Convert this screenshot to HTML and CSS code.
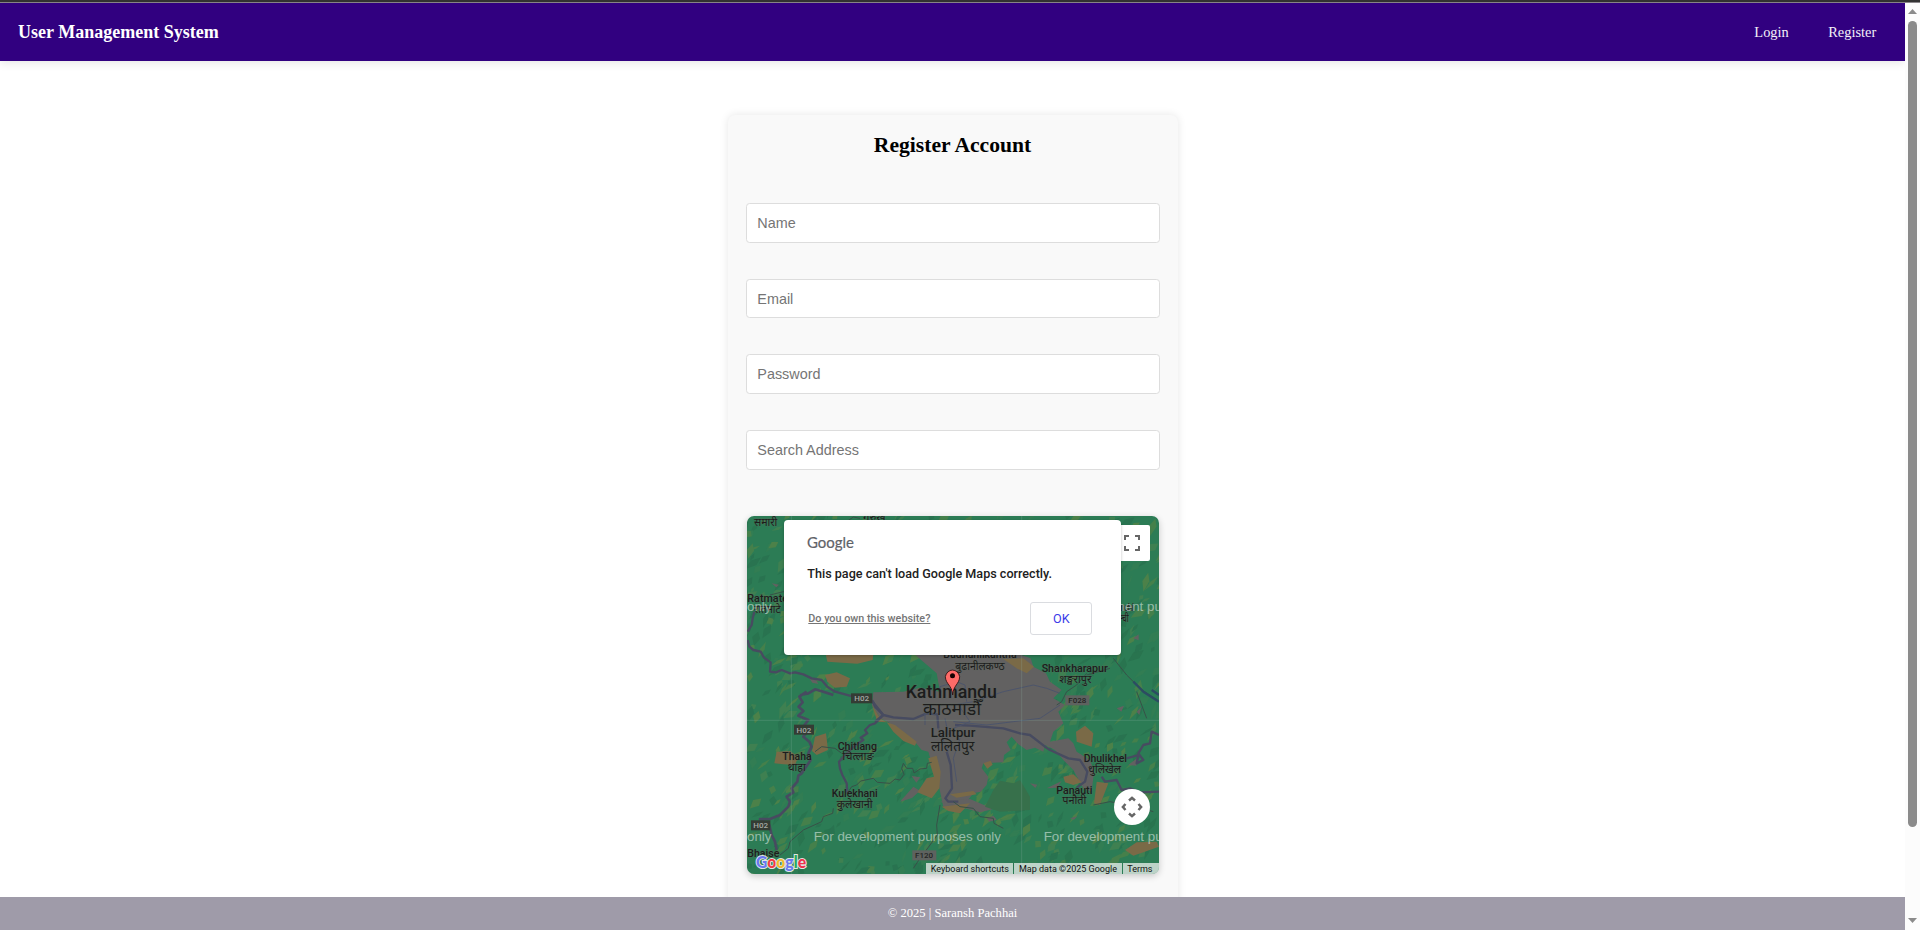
FILE: index.html
```html
<!DOCTYPE html>
<html lang="en">
<head>
<meta charset="utf-8">
<title>User Management System</title>
<link rel="stylesheet" href="styles.css">
</head>
<body>
<div class="window-edge"></div>
<div class="viewport">
  <div class="page">
    <header class="navbar">
      <div class="brand">User Management System</div>
      <nav class="nav-links"><a>Login</a><a>Register</a></nav>
    </header>
    <main class="content">
      <form class="card">
        <h2 class="card-title">Register Account</h2>
        <input class="field" placeholder="Name">
        <input class="field" placeholder="Email">
        <input class="field" placeholder="Password">
        <input class="field" placeholder="Search Address">
        <div class="map">
          <svg class="map-canvas" viewBox="21 33 1236 1074" preserveAspectRatio="none">
            <rect x="21" y="33" width="1236" height="1074" fill="#2c7c55"/>
            <g id="terrain"></g>
            <g fill="#626161">
              <path d="M520 445L590 505 600 560 540 548 490 560 400 562 396 600 420 640 446 652 480 686 520 705 545 735 565 740 572 765 592 800 598 850 610 905 625 915 680 890 700 865 722 860 740 840 745 815 725 790 730 775 790 772 792 750 812 735 800 712 815 695 835 718 860 735 885 728 910 740 915 720 945 735 970 765 1000 795 1030 850 1055 860 1062 800 1050 765 1010 740 1000 715 985 700 930 710 940 680 970 655 955 620 975 600 940 580 965 555 930 530 918 505 880 485 872 460 830 445Z"/>
              <path d="M205 515l22 8 8 14-18-4zM95 235l22 4-8 8zM480 890l40-45 20 12-24 22zM515 813l26 4-12 16zM920 850l45-22-14 20zM1005 90l18-4-6 12zM1130 610l22-8-8 18zM1190 620l14-14-6 24zM1165 780l28-22-4 24zM990 940l22-6-10 10zM870 835l22 4-6 10zM740 940l20-8 10 12-22 6zM600 890l90-8 70 30-40 10zM1180 400l16-12 0 18z"/>
            </g>
            <g fill="#7a6a47">
              <path d="M257 447L400 448 398 465 352 476 262 470z"/>
              <path d="M255 510L290 502 330 520 320 545 285 548 262 530z"/>
              <path d="M225 695L258 685 264 735 230 750 216 738z"/>
              <path d="M110 740L150 738 175 755 165 780 130 778 103 775z"/>
              <path d="M396 600L412 650 440 652 420 640zM440 652L465 660 530 710 525 722 490 708 460 680z"/>
              <path d="M565 760L590 752 602 800 598 850 575 880 532 862 560 820 582 815z"/>
              <path d="M790 462L850 460 882 485 860 505 830 490z"/>
              <path d="M1008 680L1035 662 1060 685 1055 725 1010 710z"/>
              <path d="M970 815L1000 808 1025 832 1000 840 975 832zM1070 830L1105 835 1080 900 1062 895z"/>
              <path d="M1155 1035L1190 1012 1250 1010 1257 1025 1180 1052zM605 905L690 895 660 925 625 918z"/>
              <path d="M730 775l22-8 6 12-16 12zM630 868l70-10 10 10-60 10z"/>
            </g>
            <path d="M760 855l20-28 40 8 20-10 30 50 0 40-90 5-45-15z" fill="#37704b"/>
            <g fill="none" stroke="#474b60" stroke-linejoin="round">
              <path stroke-width="7" d="M43 320L38 340 35 360 23 380M23 405L28 425 40 435 62 440 72 458 92 472 90 500 108 502 125 495 150 505 165 502 190 508 215 520 245 525 262 545 285 560 340 575 375 578 398 588 405 605 430 630 405 655 390 660 375 675 382 685 362 698 370 705 355 715 335 730 320 745 297 770 300 790 307 810 320 835 322 865"/>
              <path stroke-width="8" d="M180 570L205 565 225 553 250 560 280 570M200 560L178 575 188 592 176 605 190 618 175 632 205 645 190 665 202 680 190 695 208 710 215 725 205 745 212 765 185 805 175 812 172 830 155 850 160 862 140 875 150 890 145 905 120 930 90 942 60 942 88 960 95 990 105 1010 110 1035"/>
              <path stroke-width="7" d="M398 590L430 630 460 637 520 642 560 625 592 628 595 670M430 630L405 650M620 740L632 780 636 850 616 880 625 890 655 890"/>
              <path stroke-width="7" d="M645 660L690 662 790 670 840 685 870 690 915 725 930 735 985 760 1020 765 1042 800 1035 830 1010 848M1085 815L1095 830 1130 825 1145 855 1170 850 1200 862 1257 860M1160 760L1195 750 1190 775 1210 765 1195 745 1210 720 1230 715 1235 680 1257 690"/>
              <path stroke-width="3" stroke="#4d556b" d="M600 565L600 545 650 530 675 540 680 590M640 600L700 590 790 560 880 540 920 550 960 565M640 650L740 660 900 640 960 600M655 600L690 650 640 670M595 670L625 740M615 640L625 690M555 600v60M660 700l-20 60 10 70"/>
              <path stroke-width="3" stroke="#385148" d="M322 865L335 845 350 840 362 828 400 820 412 832 450 835 465 822 480 825 492 808 485 790 490 775 500 790 518 790 522 804 540 792 560 790 562 775 575 772M280 910L278 925 250 935 245 950 190 975 150 1010 145 1030 120 1050M600 900L590 960 592 990 570 1020 540 1060 520 1090M640 890L660 905 700 910 720 935 760 940 762 955 790 970M1040 505L1010 540 980 560 965 590 950 600M1120 460L1160 510 1200 550 1257 590M1040 510L1110 490M1220 640L1205 600 1190 560M1060 900L1110 890 1190 905 1240 920M90 270L130 260 155 275M225 740l20-15 40 5 20 15M320 50l20-14 20 4"/>
              <path stroke-width="7" stroke="#2c4c62" d="M1180 530L1210 560 1257 590M1235 555L1257 570"/>
            </g>
            <path d="M154 33V1107M845 33V1107M21 646H1257" stroke="#90b5a4" stroke-opacity=".38" stroke-width="2"/>
            <g class="shield">
              <rect x="333" y="565" width="64" height="30"/><text x="365" y="588">H02</text>
              <rect x="162" y="659" width="60" height="30"/><text x="192" y="683">H02</text>
              <rect x="33" y="946" width="58" height="30"/><text x="62" y="970">H02</text>
              <rect class="light" x="517" y="1036" width="72" height="30"/><text class="dark" x="552" y="1059">F120</text>
              <rect class="light" x="976" y="571" width="72" height="30"/><text class="dark" x="1012" y="594">F028</text>
            </g>
            <g class="place">
              <text class="local" x="77" y="62" textLength="70">समारी</text>
              <text class="local" x="403" y="48">गुरुख</text>
              <text x="22" y="291" text-anchor="start" textLength="122">Ratmate</text>
              <text class="local" x="82" y="324" textLength="80">रातमाटे</text>
              <text x="720" y="460" textLength="220">Budhanilkantha</text>
              <text class="local" x="720" y="494" textLength="148">बुढानीलकण्ठ</text>
              <text x="1004" y="501" textLength="198">Shankharapur</text>
              <text class="local" x="1006" y="535" textLength="96">शङ्खरापुर</text>
              <text x="1160" y="318" textLength="92" dx="-25">Melamchi</text>
              <text class="local" x="1146" y="350" textLength="56" dx="-8">मेलम्ची</text>
              <text class="city" x="634" y="578" textLength="274">Kathmandu</text>
              <text class="city-local" x="636" y="630" textLength="174">काठमाडौँ</text>
              <text class="town" x="639" y="696" textLength="134">Lalitpur</text>
              <text class="town-local" x="638" y="737" textLength="130">ललितपुर</text>
              <text x="352" y="734" textLength="118">Chitlang</text>
              <text class="local" x="354" y="766" textLength="94">चित्लाङ</text>
              <text x="171" y="766" textLength="88">Thaha</text>
              <text class="local" x="170" y="798" textLength="54">थाहा</text>
              <text x="344" y="877" textLength="138">Kulekhani</text>
              <text class="local" x="344" y="910" textLength="108">कुलेखानी</text>
              <text x="1096" y="771" textLength="130">Dhulikhel</text>
              <text class="local" x="1094" y="803" textLength="98">धुलिखेल</text>
              <text x="1003" y="866" textLength="108">Panauti</text>
              <text class="local" x="1003" y="897" textLength="72">पनौती</text>
              <text x="22" y="1057" text-anchor="start" textLength="96">Bhaise</text>
            </g>
            <g class="dev-note">
              <text x="21" y="319" textLength="73">only</text>
              <text x="1132" y="319">nent purposes</text>
              <text x="21" y="1008" textLength="73">only</text>
              <text x="221" y="1008" textLength="562">For development purposes only</text>
              <text x="911" y="1008" textLength="562">For development purposes only</text>
            </g>
            <path d="M638 570C636 540 617 538 616 515a22 25 0 0 1 43 0C658 538 640 540 638 570Z" fill="#ff6b68" stroke="#2a1010" stroke-width="2.5"/>
            <circle cx="637.500" cy="512" r="7.500" fill="#150000"/>
            <text class="google-mark" x="48" y="1090" textLength="150"><tspan fill="#6a78f0">G</tspan><tspan fill="#f23c45">o</tspan><tspan fill="#f0bd2d">o</tspan><tspan fill="#6a78f0">g</tspan><tspan fill="#25a95a">l</tspan><tspan fill="#f0324b">e</tspan></text>
          </svg>
          <div class="map-button fullscreen">
            <svg width="16" height="16" viewBox="0 0 16 16" fill="none" stroke="#666" stroke-width="2"><path d="M1 5V1H5M11 1H15V5M15 11V15H11M5 15H1V11"/></svg>
          </div>
          <div class="map-button camera">
            <svg width="22" height="22" viewBox="0 0 22 22" fill="none" stroke="#666" stroke-width="2.500"><path d="M8 4.500L11 1.900 14 4.500M8 17.500L11 20.100 14 17.500M4.500 8L1.900 11 4.500 14M17.500 8L20.100 11 17.500 14"/></svg>
          </div>
          <div class="attribution"><span>Keyboard shortcuts</span><span>Map data ©2025 Google</span><span>Terms</span></div>
          <div class="dialog">
            <svg class="dialog-logo" width="50" height="20" viewBox="0 0 50 20"><text x="0" y="15.300" textLength="47">Google</text></svg>
            <p class="dialog-text">This page can't load Google Maps correctly.</p>
            <div class="dialog-actions"><a class="dialog-link">Do you own this website?</a><button type="button" class="dialog-ok">OK</button></div>
          </div>
        </div>
      </form>
    </main>
    <footer class="footer">© 2025 | Saransh Pachhai</footer>
  </div>
  <div class="scrollbar">
    <svg width="9" height="5" viewBox="0 0 9 5"><path d="M4.500 0L9 5H0z" fill="#8b8b8b"/></svg>
    <div class="thumb"></div>
    <svg width="9" height="5" viewBox="0 0 9 5"><path d="M4.500 5L9 0H0z" fill="#8b8b8b"/></svg>
  </div>
</div>
<script src="terrain.js"></script>
</body>
</html>
```
FILE: styles.css
```css
* { box-sizing: border-box; }
body { margin: 0; height: 930px; overflow: hidden; display: flex; flex-direction: column; background: #fff; font-family: "Liberation Serif", "Times New Roman", serif; }
.window-edge { flex: none; height: 3px; background: #333; border-bottom: 1px solid #8b878b; }
.viewport { flex: 1; min-height: 0; display: flex; }
.page { flex: 1; min-width: 0; display: flex; flex-direction: column; }
.navbar { flex: none; height: 58px; padding: 0 28.800px 0 18px; display: flex; align-items: center; justify-content: space-between; background: #310080; color: #fff; box-shadow: 0 2px 9px rgba(0,0,0,.1); }
.brand { font-size: 18px; font-weight: bold; }
.nav-links { display: flex; gap: 39.500px; font-size: 14.4px; color: #f3f0f8; }
.content { flex: 1; min-height: 0; overflow: hidden; display: flex; justify-content: center; padding-top: 54px; }
.card { width: 450px; height: 900px; padding: 18px; background: #f9f9f9; border-radius: 7px; box-shadow: 0 0 9px rgba(0,0,0,.1); }
.card-title { margin: 0 0 45.200px; font-size: 21.6px; line-height: 25px; text-align: center; color: #000; }
.field { display: block; width: 414px; height: 39.6px; margin: 0 0 36px; padding: 0 10.8px; border: 1px solid #ddd; border-radius: 3.6px; background: #fff; font: 14.4px "Liberation Sans", Arial, sans-serif; }
.field::placeholder { color: #757575; }
.map { position: relative; width: 412px; height: 358px; margin: 46.400px 0 0 1px; border-radius: 7px; overflow: hidden; box-shadow: 0 2px 7px rgba(0,0,0,.2); font-family: Roboto, sans-serif; }
.map-canvas { display: block; width: 100%; height: 100%; }
.place text { font: 500 32px Roboto, "Noto Sans Devanagari", "Noto Sans", sans-serif; fill: #1c1c1c; stroke: #5d6a5c; stroke-opacity: .45; stroke-width: 3px; paint-order: stroke; text-anchor: middle; }
.place text[text-anchor="start"] { text-anchor: start; }
.place .local { font-size: 34px; font-weight: 400; }
.place .city { font-size: 56px; }
.place .city-local { font-size: 54px; font-weight: 400; }
.place .town { font-size: 40px; }
.place .town-local { font-size: 42px; font-weight: 400; }
.shield rect { fill: #343c34; }
.shield .light { fill: #5e625f; }
.shield text { font: 500 24px Roboto, sans-serif; fill: #a5aaa5; text-anchor: middle; }
.shield .dark { fill: #252525; }
.dev-note text { font: 40px "Liberation Sans", Arial, sans-serif; fill: #fff; fill-opacity: .5; }
.google-mark { font: 900 50px Lato, sans-serif; stroke: #dfe5e4; stroke-width: 6px; paint-order: stroke; }
.map-button { position: absolute; display: flex; align-items: center; justify-content: center; width: 36px; height: 36px; background: #fff; }
.fullscreen { top: 9px; right: 9px; border-radius: 2px; }
.camera { right: 9px; bottom: 49px; border-radius: 50%; }
.attribution { position: absolute; right: 0; bottom: 0; height: 11px; display: flex; gap: 1px; font-size: 9px; line-height: 12px; color: #111; white-space: nowrap; }
.attribution span { padding: 0 4.700px 0 4.5px; background: rgba(245,245,245,.72); }
.attribution span:last-child { padding-right: 6px; }
.dialog { position: absolute; left: 37.800px; top: 4px; width: 336.500px; height: 135px; padding: 13px 28.500px 0 23px; border-radius: 4px; background: #fff; box-shadow: 0 1px 3px rgba(0,0,0,.25); }
.dialog-logo { display: block; overflow: visible; font: 16.200px Lato, sans-serif; fill: #5f6368; stroke: #5f6368; stroke-width: .2px; }
.dialog-text { margin: 13px 0 0; font-size: 12.600px; font-weight: 500; line-height: 16px; color: #212121; white-space: nowrap; }
.dialog-actions { display: flex; justify-content: space-between; align-items: center; margin-top: 20px; padding-left: 1px; }
.dialog-link { font-size: 10.800px; font-weight: 500; color: #757575; text-decoration: underline; }
.dialog-ok { width: 62px; height: 33px; padding: 0; border: 1px solid #dadce0; border-radius: 3px; background: #fff; color: #3b3be8; font: 12.600px Roboto, sans-serif; }
.footer { flex: none; height: 33px; background: #9f9ba9; color: #fff; font-size: 12.600px; line-height: 32px; text-align: center; }
.scrollbar { flex: none; width: 15px; padding: 6px 0 7px; display: flex; flex-direction: column; align-items: center; background: #fcfcfc; }
.thumb { width: 9px; height: 806px; margin: 7px 0 auto; border-radius: 5px; background: #8b8b8b; }
```
FILE: terrain.js
```javascript
// Scatters hill-shading facets over the forest layer, from a fixed seed.
const terrain = document.getElementById("terrain");
const tones = ["#3f8051", "#45804b", "#4c8149", "#29744f", "#297350", "#327d53"];
let seed = 17;
function rand() {
  seed = (seed * 16807) % 2147483647;
  return seed / 2147483647;
}
for (let i = 0; i < 950; i++) {
  const x = 5 + rand() * 1250;
  const y = 35 + rand() * 1085;
  const length = 18 + rand() * 42;
  const width = 4 + rand() * 12;
  const facet = document.createElementNS("http://www.w3.org/2000/svg", "path");
  facet.setAttribute("d", `M0 0L${length * 0.5} ${-width}L${length} ${-width * 0.3}L${length * 0.6} ${width * 0.6}Z`);
  facet.setAttribute("transform", `translate(${x} ${y}) rotate(${-75 + rand() * 55})`);
  facet.setAttribute("fill", tones[Math.floor(rand() * tones.length)]);
  terrain.appendChild(facet);
}

// Labels with a set length scale their glyphs, so joined scripts stay joined.
for (const label of document.querySelectorAll("text[textLength]")) {
  label.setAttribute("lengthAdjust", "spacingAndGlyphs");
}
```
